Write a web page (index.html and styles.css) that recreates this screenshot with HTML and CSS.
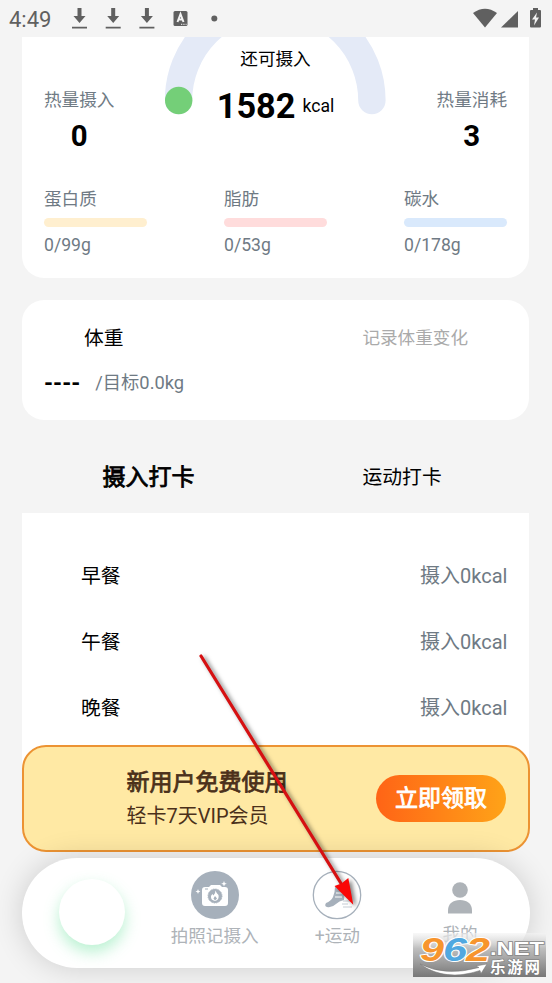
FILE: index.html
```html
<!DOCTYPE html>
<html lang="zh-CN">
<head>
<meta charset="utf-8">
<title>轻卡</title>
<link rel="stylesheet" href="styles.css">
</head>
<body>
<header class="status">
  <span class="clock">4:49</span>
  <svg class="status-left" width="156" height="24" viewBox="0 0 156 24">
    <g fill="#606060">
      <path d="M5.500 0h4v8h4l-6 7-6-7h4zM0 18.800h15v1.800H0z"/>
      <path d="M39.200 0h4v8h4l-6 7-6-7h4zM33.700 18.800h15v1.800h-15z"/>
      <path d="M72.900 0h4v8h4l-6 7-6-7h4zM67.400 18.800h15v1.800h-15z"/>
      <rect x="101.500" y="3" width="14" height="15" rx="1.500"/>
      <circle cx="142.300" cy="10.500" r="3"/>
    </g>
    <path d="M105.500 14l3-8 3 8M106.500 11.500h4" fill="none" stroke="#f4f4f4" stroke-width="2"/>
    <path d="M109 16.300h1.300m1 0h1.300m1 0h1" stroke="#f4f4f4" stroke-width="1"/>
  </svg>
  <svg class="status-right" width="70" height="22" viewBox="0 0 70 22" fill="#606060">
    <path d="M0 5Q12-3.500 24 5L12 19.500z"/>
    <path d="M45 3v16.500H28z"/>
    <path d="M60 0h5v2h2q1 0 1 1v15.500q0 1-1 1h-9q-1 0-1-1V3q0-1 1-1h2z"/>
    <path d="M64 4.500l-5 7h3l-1 6 5-8h-3z" fill="#f4f4f4"/>
  </svg>
</header>

<main>
  <section class="card intake">
    <div class="summary">
      <div class="stat"><span class="label">热量摄入</span><b>0</b></div>
      <div class="gauge">
        <svg width="222" height="78" viewBox="0 0 222 78">
          <path d="M13.500 63.500a96.700 96.700 0 0 1 193.400 0" fill="none" stroke="#e4eaf7" stroke-width="27.400" stroke-linecap="round"/>
          <circle cx="13.700" cy="63.500" r="13.700" fill="#74cf78"/>
        </svg>
        <div class="gauge-text">
          <span>还可摄入</span>
          <p><b>1582</b><i>kcal</i></p>
        </div>
      </div>
      <div class="stat"><span class="label">热量消耗</span><b>3</b></div>
    </div>
    <div class="macros">
      <div class="macro"><span>蛋白质</span><div class="bar protein"></div><span>0/99g</span></div>
      <div class="macro"><span>脂肪</span><div class="bar fat"></div><span>0/53g</span></div>
      <div class="macro"><span>碳水</span><div class="bar carbs"></div><span>0/178g</span></div>
    </div>
  </section>

  <section class="card weight">
    <div class="weight-head"><span>体重</span><span class="hint">记录体重变化</span></div>
    <div class="weight-value"><b>----</b><span>/目标0.0kg</span></div>
  </section>

  <nav class="tabs"><span class="active">摄入打卡</span><span>运动打卡</span></nav>

  <section class="meals">
    <div class="meal"><span>早餐</span><span class="kcal">摄入0kcal</span></div>
    <div class="meal"><span>午餐</span><span class="kcal">摄入0kcal</span></div>
    <div class="meal"><span>晚餐</span><span class="kcal">摄入0kcal</span></div>
  </section>
</main>

<div class="dock">
  <aside class="banner">
    <div class="offer"><strong>新用户免费使用</strong><span>轻卡7天VIP会员</span></div>
    <button>立即领取</button>
  </aside>
  <nav class="tabbar">
    <div class="item"><div class="home"></div></div>
    <div class="item">
      <svg width="50" height="50" viewBox="0 0 50 50">
        <circle cx="25" cy="25" r="24" fill="#a6b0bb"/>
        <path d="M15 17h4l2-2h9l2 2h3q3 0 3 3v13q0 3-3 3H15q-3 0-3-3V20q0-3 3-3z" fill="#fff"/>
        <circle cx="25" cy="26" r="7" fill="#a6b0bb" stroke="#a6b0bb" stroke-dasharray="1 .8"/>
        <path d="M25.500 20.500q1 3 3 4.500 1 5-3.500 6-4.500-1-4-4.500 0-1.500 1.500-2.500l1 1.500q2-2 2-5z" fill="#fff"/>
        <path d="M25 26l2 2.500-2 2-1.500-2z" fill="#a6b0bb"/>
        <path d="M15 19h3" stroke="#a6b0bb"/>
        <path d="M34 11l.8 2 2 .8-2 .8-.8 2-.8-2-2-.8 2-.8zM8 19l.7 1.700 1.700.8-1.700.7L8 24l-.7-1.800-1.800-.7 1.800-.8z" fill="#fff"/>
      </svg>
      <span>拍照记摄入</span>
    </div>
    <div class="item">
      <svg width="50" height="50" viewBox="0 0 50 50">
        <circle cx="25" cy="25" r="23.700" fill="#fff" stroke="#a6b0bb" stroke-width="1.300"/>
        <path d="M23 17l10 2-1 11q-5 1-8 4-4 4-9 3-3-1-1-4 5-2 7-6 2-5 2-10z" fill="#a6b0bb"/>
        <path d="M24 23h7m-8 4h7" stroke="#fff" stroke-width="1.200"/>
        <path d="M31 31h8m-9 3h6m-5 3h9" stroke="#c5ccd3" stroke-width="1"/>
      </svg>
      <span>+运动</span>
    </div>
    <div class="item">
      <svg width="50" height="50" viewBox="0 0 50 50" fill="#aeb3b8">
        <circle cx="25" cy="20" r="7.800"/>
        <path d="M13 43.500v-3c0-7 5-10.500 12-10.500s12 3.500 12 10.500v3z"/>
      </svg>
      <span class="mine">我的</span>
    </div>
  </nav>
</div>

<svg class="arrow" width="180" height="270" viewBox="0 0 180 270">
  <path d="M11 16L152 245" stroke="#d61012" stroke-width="3.200" stroke-linecap="round"/>
  <path d="M163.300 264.700L144.500 246l7-2.500 6.800-5.500z" fill="#fa0606"/>
</svg>

<svg class="mark" width="134" height="45" viewBox="0 0 134 45">
  <defs>
    <linearGradient id="fade" x2="0" y2="1"><stop stop-color="#f4f4f4" stop-opacity=".6"/><stop offset=".35" stop-color="#bbb" stop-opacity=".95"/><stop offset="1" stop-color="#777"/></linearGradient>
  </defs>
  <rect width="133" height="44" fill="url(#fade)"/>
  <g class="mark-digits">
    <text x="7" y="28" textLength="24" lengthAdjust="spacingAndGlyphs" fill="#f7952d">9</text>
    <text x="30" y="28" textLength="24" lengthAdjust="spacingAndGlyphs" fill="#50a8e0">6</text>
    <text x="53" y="28" textLength="24" lengthAdjust="spacingAndGlyphs" fill="#f7952d">2</text>
  </g>
  <text class="mark-net" x="77" y="22" textLength="54" lengthAdjust="spacingAndGlyphs">.NET</text>
  <text class="mark-name" x="77" y="39.500" textLength="50">乐游网</text>
  <path d="M7 31q25 13 59 3.500l-3-1.500 11-2-6 9.500-1-3Q32 49 7 31z" fill="#fff" stroke="#777" stroke-width=".5"/>
</svg>
</body>
</html>
```

FILE: styles.css
```css
* { box-sizing: border-box; }

body {
  position: relative;
  margin: 0;
  width: 552px;
  height: 983px;
  overflow: hidden;
  background: #f4f4f4;
  color: #000;
  font: 19.8px/28px Roboto, "Noto Sans CJK SC", sans-serif;
}

svg { display: block; flex: none; }
p { margin: 0; }
i { font-style: normal; }

.status {
  display: flex;
  align-items: flex-start;
  height: 37px;
  padding: 8px 9px 0 9px;
  color: #606060;
}
.clock { width: 62.500px; font-size: 22px; line-height: 24px; }
.status-right { margin-left: auto; }

main { padding: 0 23px 0 21.500px; }
.card { background: #fff; border-radius: 22px; padding: 0 22px 0 22.500px; }

.intake { height: 241px; border-radius: 0 0 22px 22px; }
.summary { display: flex; justify-content: space-between; height: 149px; }
.stat { display: flex; flex-direction: column; align-items: center; padding-top: 50px; }
.stat .label { font-size: 17.600px; line-height: 26px; color: #6f7a84; }
.stat b { font-size: 29.400px; line-height: 34px; margin-top: 6px; }

.gauge { display: grid; width: 222px; }
.gauge > * { grid-area: 1 / 1; }
.gauge-text { display: flex; flex-direction: column; align-items: center; padding-top: 9px; font-size: 17.600px; line-height: 26px; }
.gauge-text p { display: flex; align-items: center; gap: 7px; margin-top: 14px; }
.gauge-text b { font-size: 34.300px; line-height: 40px; }

.macros { display: flex; justify-content: space-between; color: #6f7a84; font-size: 17.600px; line-height: 26px; }
.macro { width: 103px; }
.macro span { display: block; }
.bar { height: 9px; margin: 6px 0 5px; border-radius: 5px; }
.protein { background: #ffefcf; }
.fat { background: #ffdcdc; }
.carbs { background: #d9e9fc; }

.weight { height: 120px; margin-top: 22px; padding-top: 25px; }
.weight-head { display: flex; justify-content: space-between; padding: 0 39px 0 40px; }
.hint { margin-top: -1px; font-size: 17.600px; color: #aaa; }
.weight-value { display: flex; gap: 15px; margin-top: 16px; color: #6f7a84; font-size: 18.300px; }
.weight-value b { padding-top: 1px; color: #000; font-size: 23px; }

.tabs { display: flex; height: 93px; align-items: center; padding-top: 23px; }
.tabs span { flex: 1; text-align: center; }
.tabs .active { font-size: 23px; -webkit-text-stroke: .8px; }

.meals { height: 258px; padding: 31px 21.500px 0 59.500px; background: #fff; }
.meal { display: flex; justify-content: space-between; align-items: center; height: 66px; }
.kcal { margin-top: -2px; color: #6f7a84; font-size: 20px; }

.dock { position: absolute; left: 22px; right: 22px; bottom: 15px; }
.banner {
  display: flex;
  align-items: center;
  justify-content: space-between;
  height: 107px;
  margin-bottom: 6px;
  padding: 0 22px 0 102.500px;
  border: 2px solid #ec9333;
  border-radius: 24px;
  background: #ffe9a4;
  color: #4b301a;
}
.offer { display: flex; flex-direction: column; gap: 4px; font-size: 20px; }
.offer strong { font-size: 23px; line-height: 31px; font-weight: 400; -webkit-text-stroke: .8px; }
.banner button {
  width: 130px;
  height: 47px;
  padding: 0;
  border: 0;
  border-radius: 24px;
  background: linear-gradient(90deg, #ff6416, #ffa318);
  color: #fff;
  font: 23px/47px Roboto, "Noto Sans CJK SC", sans-serif;
  -webkit-text-stroke: .8px;
}

.tabbar {
  position: relative;
  display: flex;
  height: 110px;
  padding: 12px 8.500px 0;
  border-radius: 55px;
  background: #fff;
  box-shadow: 0 0 30px rgba(0, 0, 0, .16);
  color: #aeb3b8;
  font-size: 17.600px;
}
.item { display: flex; flex: 1; flex-direction: column; align-items: center; gap: 2px; }
.home { width: 66px; height: 66px; margin-top: 9px; border-radius: 50%; background: #fff; box-shadow: 0 7px 15px rgba(80, 220, 140, .4); }
.mine { margin-top: -2px; }

.arrow { position: absolute; left: 190px; top: 640px; filter: drop-shadow(3px 2px 2px rgba(0, 0, 0, .5)); }

.mark { position: absolute; left: 413px; top: 933px; overflow: visible; }
.mark-digits { font: italic 700 33px "Liberation Sans", sans-serif; stroke: #fff; stroke-width: 2px; paint-order: stroke; }
.mark-net { font: 700 18px "Liberation Sans", sans-serif; fill: #fff; stroke: #888; stroke-width: 1.500px; paint-order: stroke; }
.mark-name { font: 700 15.500px "Noto Sans CJK SC", sans-serif; fill: #fff; stroke: #777; stroke-width: 1px; paint-order: stroke; }
```
